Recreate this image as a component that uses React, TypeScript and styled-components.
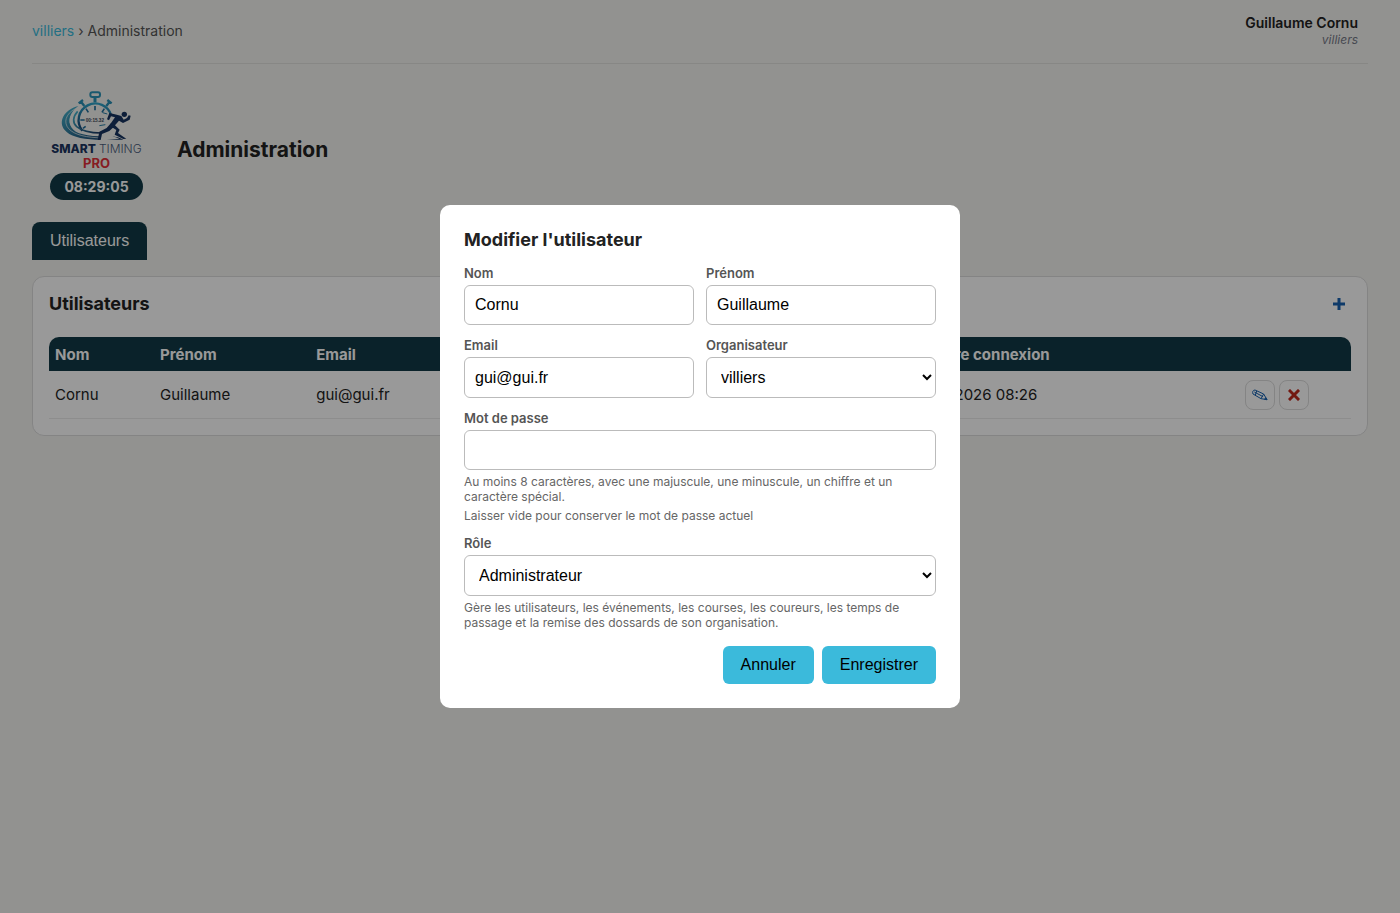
import React from "react";
import styled, { createGlobalStyle } from "styled-components";

const SANS = `Inter, "Liberation Sans", sans-serif`;
const CONTROL = `"Liberation Sans", Arial, sans-serif`;

const GlobalStyle = createGlobalStyle`
  *, *::before, *::after { box-sizing: border-box; }
  body {
    margin: 0;
    background: #f4f4f0;
    color: #222;
    font-family: ${SANS};
    font-size: 15px;
  }
`;

const Page = styled.div`
  min-height: 100vh;
  padding: 0 32px 32px;
`;

const TopBar = styled.header`
  display: flex;
  align-items: center;
  justify-content: space-between;
  height: 64px;
  padding: 0 10px 2px 0;
  border-bottom: 1px solid #e2e2de;
`;

const Breadcrumb = styled.nav`
  font-size: 14px;
  line-height: 20px;
  color: #555;
`;

const CrumbLink = styled.a`
  color: #3bbadb;
  text-decoration: none;
`;

const Account = styled.div`
  display: flex;
  flex-direction: column;
  align-items: flex-end;
`;

const AccountName = styled.strong`
  font-size: 14px;
  line-height: 18px;
  font-weight: 600;
`;

const AccountOrg = styled.em`
  font-size: 12px;
  line-height: 16px;
  color: #777a88;
`;

const Hero = styled.div`
  display: flex;
  align-items: center;
  gap: 16px;
  height: 158px;
  padding-top: 14px;
`;

const Brand = styled.div`
  display: flex;
  flex-direction: column;
  align-items: center;
  width: 129px;
  padding-bottom: 12px;
`;

const BrandName = styled.div`
  display: flex;
  gap: 3px;
  font-size: 12px;
  line-height: 14px;
  font-weight: 800;
  color: #1b3560;
`;

const BrandThin = styled.span`
  font-weight: 300;
  color: #4a5c7c;
`;

const BrandPro = styled.div`
  font-size: 13px;
  line-height: 15px;
  font-weight: 700;
  color: #e0303a;
`;

const Clock = styled.time`
  padding: 0 14px;
  margin-top: 2px;
  border-radius: 14px;
  background: #113a46;
  color: #fff;
  font-size: 14px;
  line-height: 27px;
  font-weight: 700;
`;

const PageTitle = styled.h1`
  margin: 0;
  font-size: 21px;
  line-height: 28px;
  font-weight: 700;
`;

const Tabs = styled.div`
  display: flex;
`;

const Tab = styled.button`
  height: 38px;
  padding: 0 18px;
  border: 0;
  border-radius: 8px 8px 0 0;
  background: #113a46;
  color: #fff;
  font: 16px ${CONTROL};
`;

const Card = styled.section`
  margin-top: 16px;
  padding: 10px 16px 16px;
  border: 1px solid #dcdcdc;
  border-radius: 12px;
  background: #fff;
`;

const CardHead = styled.div`
  display: flex;
  align-items: center;
  justify-content: space-between;
  height: 34px;
  margin-bottom: 16px;
`;

const CardTitle = styled.h2`
  margin: 0;
  font-size: 18px;
  line-height: 24px;
  font-weight: 700;
`;

const AddButton = styled.button`
  display: flex;
  padding: 6px;
  border: 0;
  background: none;
`;

const Table = styled.table`
  width: 100%;
  table-layout: fixed;
  border-collapse: separate;
  border-spacing: 0;
`;

const Col = styled.col<{ $w?: string }>`
  width: ${(p) => p.$w ?? "auto"};
`;

const Th = styled.th`
  height: 34px;
  padding: 0 6px;
  background: #113a46;
  color: #fff;
  font-size: 15px;
  font-weight: 700;
  text-align: left;
  &:first-child { border-top-left-radius: 10px; }
  &:last-child { border-top-right-radius: 10px; }
`;

const Td = styled.td`
  height: 48px;
  padding: 0 6px;
  border-bottom: 1px solid #ebebeb;
  font-size: 15px;
`;

const Actions = styled.div`
  display: flex;
  gap: 4px;
`;

const IconButton = styled.button`
  display: flex;
  align-items: center;
  justify-content: center;
  width: 30px;
  height: 30px;
  padding: 0;
  border: 1px solid #dcdcdc;
  border-radius: 8px;
  background: #fff;
`;

const Overlay = styled.div`
  position: fixed;
  inset: 0;
  display: flex;
  align-items: center;
  justify-content: center;
  background: rgba(0, 0, 0, 0.4);
`;

const Dialog = styled.form`
  width: 520px;
  max-width: 92%;
  padding: 24px;
  border-radius: 10px;
  background: #fff;
`;

const DialogTitle = styled.h2`
  margin: 0 0 14px;
  font-size: 18px;
  line-height: 22px;
  font-weight: 700;
`;

const Fields = styled.div`
  display: grid;
  grid-template-columns: 1fr 1fr;
  gap: 12px;
`;

const Field = styled.div<{ $wide?: boolean }>`
  display: flex;
  flex-direction: column;
  gap: 4px;
  ${(p) => p.$wide && "grid-column: 1 / -1;"}
`;

const Label = styled.label`
  font-size: 13px;
  line-height: 16px;
  font-weight: 600;
  color: #555;
`;

const Input = styled.input`
  flex: 1 0 auto;
  width: 100%;
  min-height: 40px;
  padding: 0 10px;
  border: 1px solid #bbb;
  border-radius: 6px;
  background: #fff;
  color: #000;
  font: 16px ${CONTROL};
`;

const Select = styled.select`
  width: 100%;
  height: 41px;
  padding: 0 10px;
  border: 1px solid #bbb;
  border-radius: 6px;
  background: #fff;
  color: #000;
  font: 16px ${CONTROL};
`;

const Hint = styled.small`
  font-size: 12px;
  line-height: 15px;
  color: #666;
`;

const Buttons = styled.div`
  display: flex;
  justify-content: flex-end;
  gap: 8px;
  margin-top: 16px;
`;

const Button = styled.button`
  height: 38px;
  padding: 0 18px;
  border: 0;
  border-radius: 6px;
  background: #3bbadb;
  color: #000;
  font: 16px ${CONTROL};
`;

function Logo() {
  return (
    <svg width="93" height="54" viewBox="0 0 279 162" fill="none" aria-hidden="true">
      <defs>
        <linearGradient id="watch" x1="0" y1="0" x2="0" y2="1">
          <stop offset="0" stopColor="#2fa3c8" />
          <stop offset="1" stopColor="#173f70" />
        </linearGradient>
        <linearGradient id="trail" x1="0" y1="0" x2="1" y2="1">
          <stop offset="0" stopColor="#48b9d2" />
          <stop offset="1" stopColor="#14305c" />
        </linearGradient>
      </defs>
      <rect x="121" y="13" width="29" height="14" rx="6" stroke="#2b93b8" strokeWidth="6" />
      <path d="M135 27v16" stroke="#2b93b8" strokeWidth="9" />
      <path d="M86 46l13-10M93 41l10 13M172 36l13 10M179 41l-10 13" stroke="#2b8fb5" strokeWidth="7" />
      <path d="M97 128A50 50 0 1 1 184 83" stroke="url(#watch)" strokeWidth="7" />
      <path d="M135 54v13M108 62l7 11M163 62l-7 11M91 96h13M99 121l8-6" stroke="#206f9b" strokeWidth="5" />
      <path d="M85 54C40 66 24 102 44 126c14 18 46 27 94 29h82c-14-8-28-10-52-10-58 0-92-8-103-26C51 98 60 72 85 54z" fill="url(#trail)" />
      <path d="M76 62C46 78 40 104 56 122c18 19 52 27 106 28M81 65C59 82 54 102 67 117c16 17 46 22 92 23" stroke="#f4f4f0" strokeWidth="2" />
      <path d="M83 70C68 86 67 104 80 116c14 12 40 19 74 19" stroke="url(#trail)" strokeWidth="5" />
      <path d="M148 158l8-19 20-9 12 3-6 9 26 10z" fill="#f4f4f0" />
      <g fill="#16335f">
        <circle cx="223" cy="79" r="8" />
        <path d="M214 84c-10-3-22-6-36-9l-7 19 6 3 6-12 12 3-12 17c-3 5-2 9 2 12l14 9-5 14 26 13 9-1-8-5-17-12 5-10-14-13 12-14 12 7 20-10 3-12-6-1-5 8-10 5z" />
        <path d="M183 105l-13 15-22 11-5 25h9l4-18 22-9 14-13z" />
      </g>
      <path d="M172 78l-14-4M166 110l-18 3" stroke="#2a7ea6" strokeWidth="3" />
      <text x="107" y="102" fill="#3a4458" fontFamily="Liberation Sans, sans-serif" fontSize="14" fontWeight="700">
        00:15.32
      </text>
    </svg>
  );
}

export default function App() {
  return (
    <>
      <GlobalStyle />
      <Page>
        <TopBar>
          <Breadcrumb>
            <CrumbLink href="#">villiers</CrumbLink> › Administration
          </Breadcrumb>
          <Account>
            <AccountName>Guillaume Cornu</AccountName>
            <AccountOrg>villiers</AccountOrg>
          </Account>
        </TopBar>
        <Hero>
          <Brand>
            <Logo />
            <BrandName>
              SMART <BrandThin>TIMING</BrandThin>
            </BrandName>
            <BrandPro>PRO</BrandPro>
            <Clock>08:29:05</Clock>
          </Brand>
          <PageTitle>Administration</PageTitle>
        </Hero>
        <Tabs>
          <Tab type="button">Utilisateurs</Tab>
        </Tabs>
        <Card>
          <CardHead>
            <CardTitle>Utilisateurs</CardTitle>
            <AddButton type="button" aria-label="Ajouter un utilisateur">
              <svg width="12" height="12" viewBox="0 0 12 12" aria-hidden="true">
                <path d="M6 0v12M0 6h12" stroke="#1862b0" strokeWidth="3" />
              </svg>
            </AddButton>
          </CardHead>
          <Table>
            <colgroup>
              <Col $w="105px" />
              <Col $w="12%" />
              <Col $w="195px" />
              <Col $w="12%" />
              <Col $w="239px" />
              <Col />
              <Col $w="112px" />
            </colgroup>
            <thead>
              <tr>
                <Th>Nom</Th>
                <Th>Prénom</Th>
                <Th>Email</Th>
                <Th>Organisateur</Th>
                <Th>Rôle</Th>
                <Th>Dernière connexion</Th>
                <Th />
              </tr>
            </thead>
            <tbody>
              <tr>
                <Td>Cornu</Td>
                <Td>Guillaume</Td>
                <Td>gui@gui.fr</Td>
                <Td>villiers</Td>
                <Td>Administrateur</Td>
                <Td>20/02/2026 08:26</Td>
                <Td>
                  <Actions>
                    <IconButton type="button" aria-label="Modifier">
                      <svg width="16" height="12" viewBox="0 0 48 36" fill="none" stroke="#1862b0" strokeWidth="3" aria-hidden="true">
                        <path d="M9 3l26 12 10 17-18-3L3 15C0 9 3 3 9 3zM7 9l26 14M14 6L10 18M35 15l-8 14" />
                        <path d="M45 32l-7-1 3-5z" fill="#1862b0" />
                      </svg>
                    </IconButton>
                    <IconButton type="button" aria-label="Supprimer">
                      <svg width="12" height="12" viewBox="0 0 12 12" aria-hidden="true">
                        <path d="M2 2l8 8M10 2l-8 8" stroke="#c0281c" strokeWidth="3" strokeLinecap="square" />
                      </svg>
                    </IconButton>
                  </Actions>
                </Td>
              </tr>
            </tbody>
          </Table>
        </Card>
      </Page>
      <Overlay>
        <Dialog role="dialog" aria-modal="true" aria-labelledby="dialog-title">
          <DialogTitle id="dialog-title">Modifier l'utilisateur</DialogTitle>
          <Fields>
            <Field>
              <Label htmlFor="nom">Nom</Label>
              <Input id="nom" defaultValue="Cornu" />
            </Field>
            <Field>
              <Label htmlFor="prenom">Prénom</Label>
              <Input id="prenom" defaultValue="Guillaume" />
            </Field>
            <Field>
              <Label htmlFor="email">Email</Label>
              <Input id="email" type="email" defaultValue="gui@gui.fr" />
            </Field>
            <Field>
              <Label htmlFor="orga">Organisateur</Label>
              <Select id="orga" defaultValue="villiers">
                <option>villiers</option>
              </Select>
            </Field>
            <Field $wide>
              <Label htmlFor="mdp">Mot de passe</Label>
              <Input id="mdp" type="password" />
              <Hint>
                Au moins 8 caractères, avec une majuscule, une minuscule, un chiffre et un caractère spécial.
              </Hint>
              <Hint>Laisser vide pour conserver le mot de passe actuel</Hint>
            </Field>
            <Field $wide>
              <Label htmlFor="role">Rôle</Label>
              <Select id="role" defaultValue="Administrateur">
                <option>Administrateur</option>
              </Select>
              <Hint>
                Gère les utilisateurs, les événements, les courses, les coureurs, les temps de passage et la remise des
                dossards de son organisation.
              </Hint>
            </Field>
          </Fields>
          <Buttons>
            <Button type="button">Annuler</Button>
            <Button type="submit">Enregistrer</Button>
          </Buttons>
        </Dialog>
      </Overlay>
    </>
  );
}
